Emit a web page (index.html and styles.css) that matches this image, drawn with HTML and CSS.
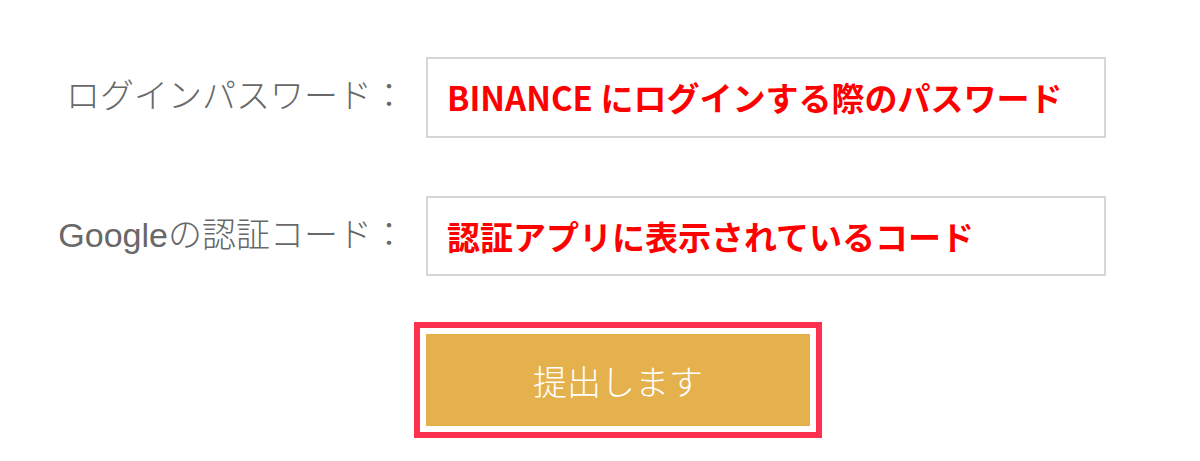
FILE: index.html
```html
<!DOCTYPE html>
<html lang="ja">
<head>
<meta charset="utf-8">
<title>Login</title>
<link rel="stylesheet" href="styles.css">
</head>
<body>
<form class="form">
  <div class="row row-first">
    <label class="label">ログインパスワード：</label>
    <div class="field"><span class="hint">BINANCE にログインする際のパスワード</span></div>
  </div>
  <div class="row row-second">
    <label class="label">Googleの認証コード：</label>
    <div class="field"><span class="hint">認証アプリに表示されているコード</span></div>
  </div>
  <div class="actions">
    <div class="highlight">
      <button type="button" class="submit">提出します</button>
    </div>
  </div>
</form>
</body>
</html>
```
FILE: styles.css
```css
html, body {
  margin: 0;
  padding: 0;
  background: #ffffff;
}
body {
  width: 1200px;
  height: 461px;
  overflow: hidden;
  font-family: "Liberation Sans", "Noto Sans CJK JP", sans-serif;
}
.form {
  padding-top: 57px;
  display: flex;
  flex-direction: column;
}
.row {
  display: grid;
  grid-template-columns: 406px 680px;
  column-gap: 20px;
  align-items: center;
}
.row-first .field { height: 77px; }
.row-second { margin-top: 58px; }
.row-second .field { height: 76px; }
.label {
  text-align: right;
  font-size: 34px;
  font-weight: 300;
  color: #686868;
  white-space: nowrap;
  line-height: 1;
  padding-bottom: 3px;
}
.field {
  border: 2px solid #d6d6d6;
  display: flex;
  align-items: center;
  padding-left: 19px;
}
.hint {
  font-family: "Noto Sans CJK JP", sans-serif;
  font-weight: 700;
  font-size: 33px;
  color: #ff0000;
  white-space: nowrap;
  line-height: 1;
}
.actions {
  margin-top: 46px;
  padding-left: 414px;
  display: flex;
}
.highlight {
  border: 6px solid #fe3050;
  padding: 6px;
  background: #ffffff;
}
.submit {
  width: 384px;
  height: 92px;
  border: none;
  margin: 0;
  padding: 0;
  background: #e5b14d;
  color: #ffffff;
  font-family: "Noto Sans CJK JP", sans-serif;
  font-weight: 300;
  font-size: 34px;
  display: block;
}
```
